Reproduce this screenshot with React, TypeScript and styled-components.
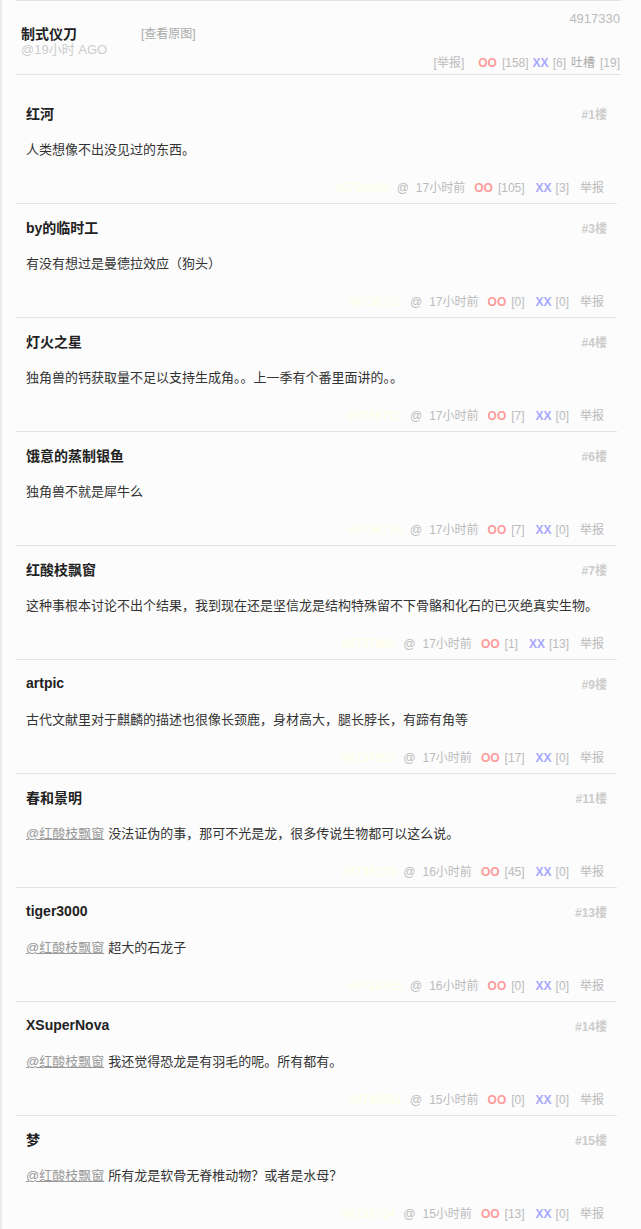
import * as React from 'react';
import styled, { createGlobalStyle } from 'styled-components';

const GlobalStyle = createGlobalStyle`
  html, body {
    margin: 0;
    padding: 0;
    background: #fcfcfc;
  }
  body {
    font-family: 'Liberation Sans', Arial, 'Noto Sans CJK SC', sans-serif;
    font-size: 13px;
    color: #333;
  }
`;

const StyledPage = styled.div`
  min-height: 1229px;
  border-left: 2px solid #ebebeb;
  padding-left: 14px;
  box-sizing: border-box;
`;

const StyledPostHeader = styled.div`
  width: 605px;
  height: 75px;
  box-sizing: border-box;
  display: flex;
  border-top: 1px solid #e4e4e4;
  border-bottom: 1px solid #e4e4e4;
`;

const StyledAuthorBlock = styled.div`
  width: 125px;
  padding: 24px 0 0 5px;
  box-sizing: border-box;
  display: flex;
  flex-direction: column;
`;

const StyledAuthorName = styled.span`
  font-size: 14px;
  font-weight: bold;
  line-height: 18px;
  color: #222;
`;

const StyledAuthorTime = styled.span`
  font-size: 13px;
  line-height: 14px;
  color: #ccc;
`;

const StyledViewOriginal = styled.span`
  padding-top: 25px;
  font-size: 12px;
  line-height: 16px;
  color: #aaa;
`;

const StyledPostMeta = styled.div`
  flex: 1;
  display: flex;
  flex-direction: column;
  align-items: flex-end;
  justify-content: space-between;
  padding: 10px 1px 3px 0;
`;

const StyledPostId = styled.span`
  font-size: 13px;
  line-height: 16px;
  color: #bbb;
`;

const StyledPostActions = styled.div`
  display: flex;
  font-size: 12px;
  line-height: 16px;
  color: #bbb;
`;

const StyledAction = styled.span<{ $gap?: number; $tone?: string; $bold?: boolean }>`
  margin-left: ${({ $gap }) => $gap ?? 0}px;
  color: ${({ $tone }) => $tone ?? '#bbb'};
  font-weight: ${({ $bold }) => ($bold ? 'bold' : 'normal')};
`;

const StyledCommentList = styled.ol`
  list-style: none;
  margin: 0;
  padding: 15px 0 0;
  width: 601px;
`;

const StyledComment = styled.li`
  padding: 13px 10px 5px;
  border-bottom: 1px solid #e4e4e4;
`;

const StyledCommentHead = styled.div`
  display: flex;
  justify-content: space-between;
  align-items: center;
  height: 20px;
`;

const StyledCommenter = styled.span`
  font-size: 14px;
  font-weight: bold;
  color: #222;
`;

const StyledFloor = styled.span`
  font-size: 12px;
  font-weight: bold;
  color: #ccc;
`;

const StyledCommentText = styled.p`
  margin: 17px 0 0;
  font-size: 13px;
  line-height: 20px;
  color: #333;
`;

const StyledMention = styled.span`
  color: #999;
  text-decoration: underline;
  margin-right: 4px;
`;

const StyledCommentFooter = styled.div`
  margin-top: 18px;
  padding-right: 3px;
  display: flex;
  justify-content: flex-end;
  font-size: 12px;
  line-height: 20px;
  color: #bbb;
`;

const PINK = '#ff9a9a';
const BLUE = '#a8a8ff';

interface CommentData {
  id: number;
  floor: number;
  author: string;
  mention?: string;
  text: string;
  time: string;
  oo: number;
  xx: number;
}

const comments: CommentData[] = [
  { id: 8736699, floor: 1, author: '红河', text: '人类想像不出没见过的东西。', time: '17小时前', oo: 105, xx: 3 },
  { id: 8736701, floor: 3, author: 'by的临时工', text: '有没有想过是曼德拉效应（狗头）', time: '17小时前', oo: 0, xx: 0 },
  { id: 8736712, floor: 4, author: '灯火之星', text: '独角兽的钙获取量不足以支持生成角。。上一季有个番里面讲的。。', time: '17小时前', oo: 7, xx: 0 },
  { id: 8736735, floor: 6, author: '饿意的蒸制银鱼', text: '独角兽不就是犀牛么', time: '17小时前', oo: 7, xx: 0 },
  {
    id: 8737888,
    floor: 7,
    author: '红酸枝飘窗',
    text: '这种事根本讨论不出个结果，我到现在还是坚信龙是结构特殊留不下骨骼和化石的已灭绝真实生物。',
    time: '17小时前',
    oo: 1,
    xx: 13,
  },
  { id: 8737992, floor: 9, author: 'artpic', text: '古代文献里对于麒麟的描述也很像长颈鹿，身材高大，腿长脖长，有蹄有角等', time: '17小时前', oo: 17, xx: 0 },
  {
    id: 8738120,
    floor: 11,
    author: '春和景明',
    mention: '@红酸枝飘窗',
    text: '没法证伪的事，那可不光是龙，很多传说生物都可以这么说。',
    time: '16小时前',
    oo: 45,
    xx: 0,
  },
  { id: 8738315, floor: 13, author: 'tiger3000', mention: '@红酸枝飘窗', text: '超大的石龙子', time: '16小时前', oo: 0, xx: 0 },
  { id: 8738551, floor: 14, author: 'XSuperNova', mention: '@红酸枝飘窗', text: '我还觉得恐龙是有羽毛的呢。所有都有。', time: '15小时前', oo: 0, xx: 0 },
  { id: 8738764, floor: 15, author: '梦', mention: '@红酸枝飘窗', text: '所有龙是软骨无脊椎动物？或者是水母？', time: '15小时前', oo: 13, xx: 0 },
];

const Comment = ({ comment }: { comment: CommentData }) => (
  <StyledComment>
    <StyledCommentHead>
      <StyledCommenter>{comment.author}</StyledCommenter>
      <StyledFloor>#{comment.floor}楼</StyledFloor>
    </StyledCommentHead>
    <StyledCommentText>
      {comment.mention && <StyledMention>{comment.mention}</StyledMention>}
      {comment.text}
    </StyledCommentText>
    <StyledCommentFooter>
      <StyledAction $tone="#fdfde4">#{comment.id}</StyledAction>
      <StyledAction $gap={8}>@</StyledAction>
      <StyledAction $gap={7}>{comment.time}</StyledAction>
      <StyledAction $gap={9} $tone={PINK} $bold>
        OO
      </StyledAction>
      <StyledAction $gap={5}>[{comment.oo}]</StyledAction>
      <StyledAction $gap={11} $tone={BLUE} $bold>
        XX
      </StyledAction>
      <StyledAction $gap={4}>[{comment.xx}]</StyledAction>
      <StyledAction $gap={11}>举报</StyledAction>
    </StyledCommentFooter>
  </StyledComment>
);

const App = () => (
  <StyledPage>
    <GlobalStyle />
    <StyledPostHeader>
      <StyledAuthorBlock>
        <StyledAuthorName>制式仪刀</StyledAuthorName>
        <StyledAuthorTime>@19小时 AGO</StyledAuthorTime>
      </StyledAuthorBlock>
      <StyledViewOriginal>[查看原图]</StyledViewOriginal>
      <StyledPostMeta>
        <StyledPostId>4917330</StyledPostId>
        <StyledPostActions>
          <StyledAction>[举报]</StyledAction>
          <StyledAction $gap={14} $tone={PINK} $bold>
            OO
          </StyledAction>
          <StyledAction $gap={5}>[158]</StyledAction>
          <StyledAction $gap={4} $tone={BLUE} $bold>
            XX
          </StyledAction>
          <StyledAction $gap={4}>[6]</StyledAction>
          <StyledAction $gap={5} $tone="#aaa">
            吐槽
          </StyledAction>
          <StyledAction $gap={5}>[19]</StyledAction>
        </StyledPostActions>
      </StyledPostMeta>
    </StyledPostHeader>
    <StyledCommentList>
      {comments.map((c) => (
        <Comment key={c.id} comment={c} />
      ))}
    </StyledCommentList>
  </StyledPage>
);

export default App;
